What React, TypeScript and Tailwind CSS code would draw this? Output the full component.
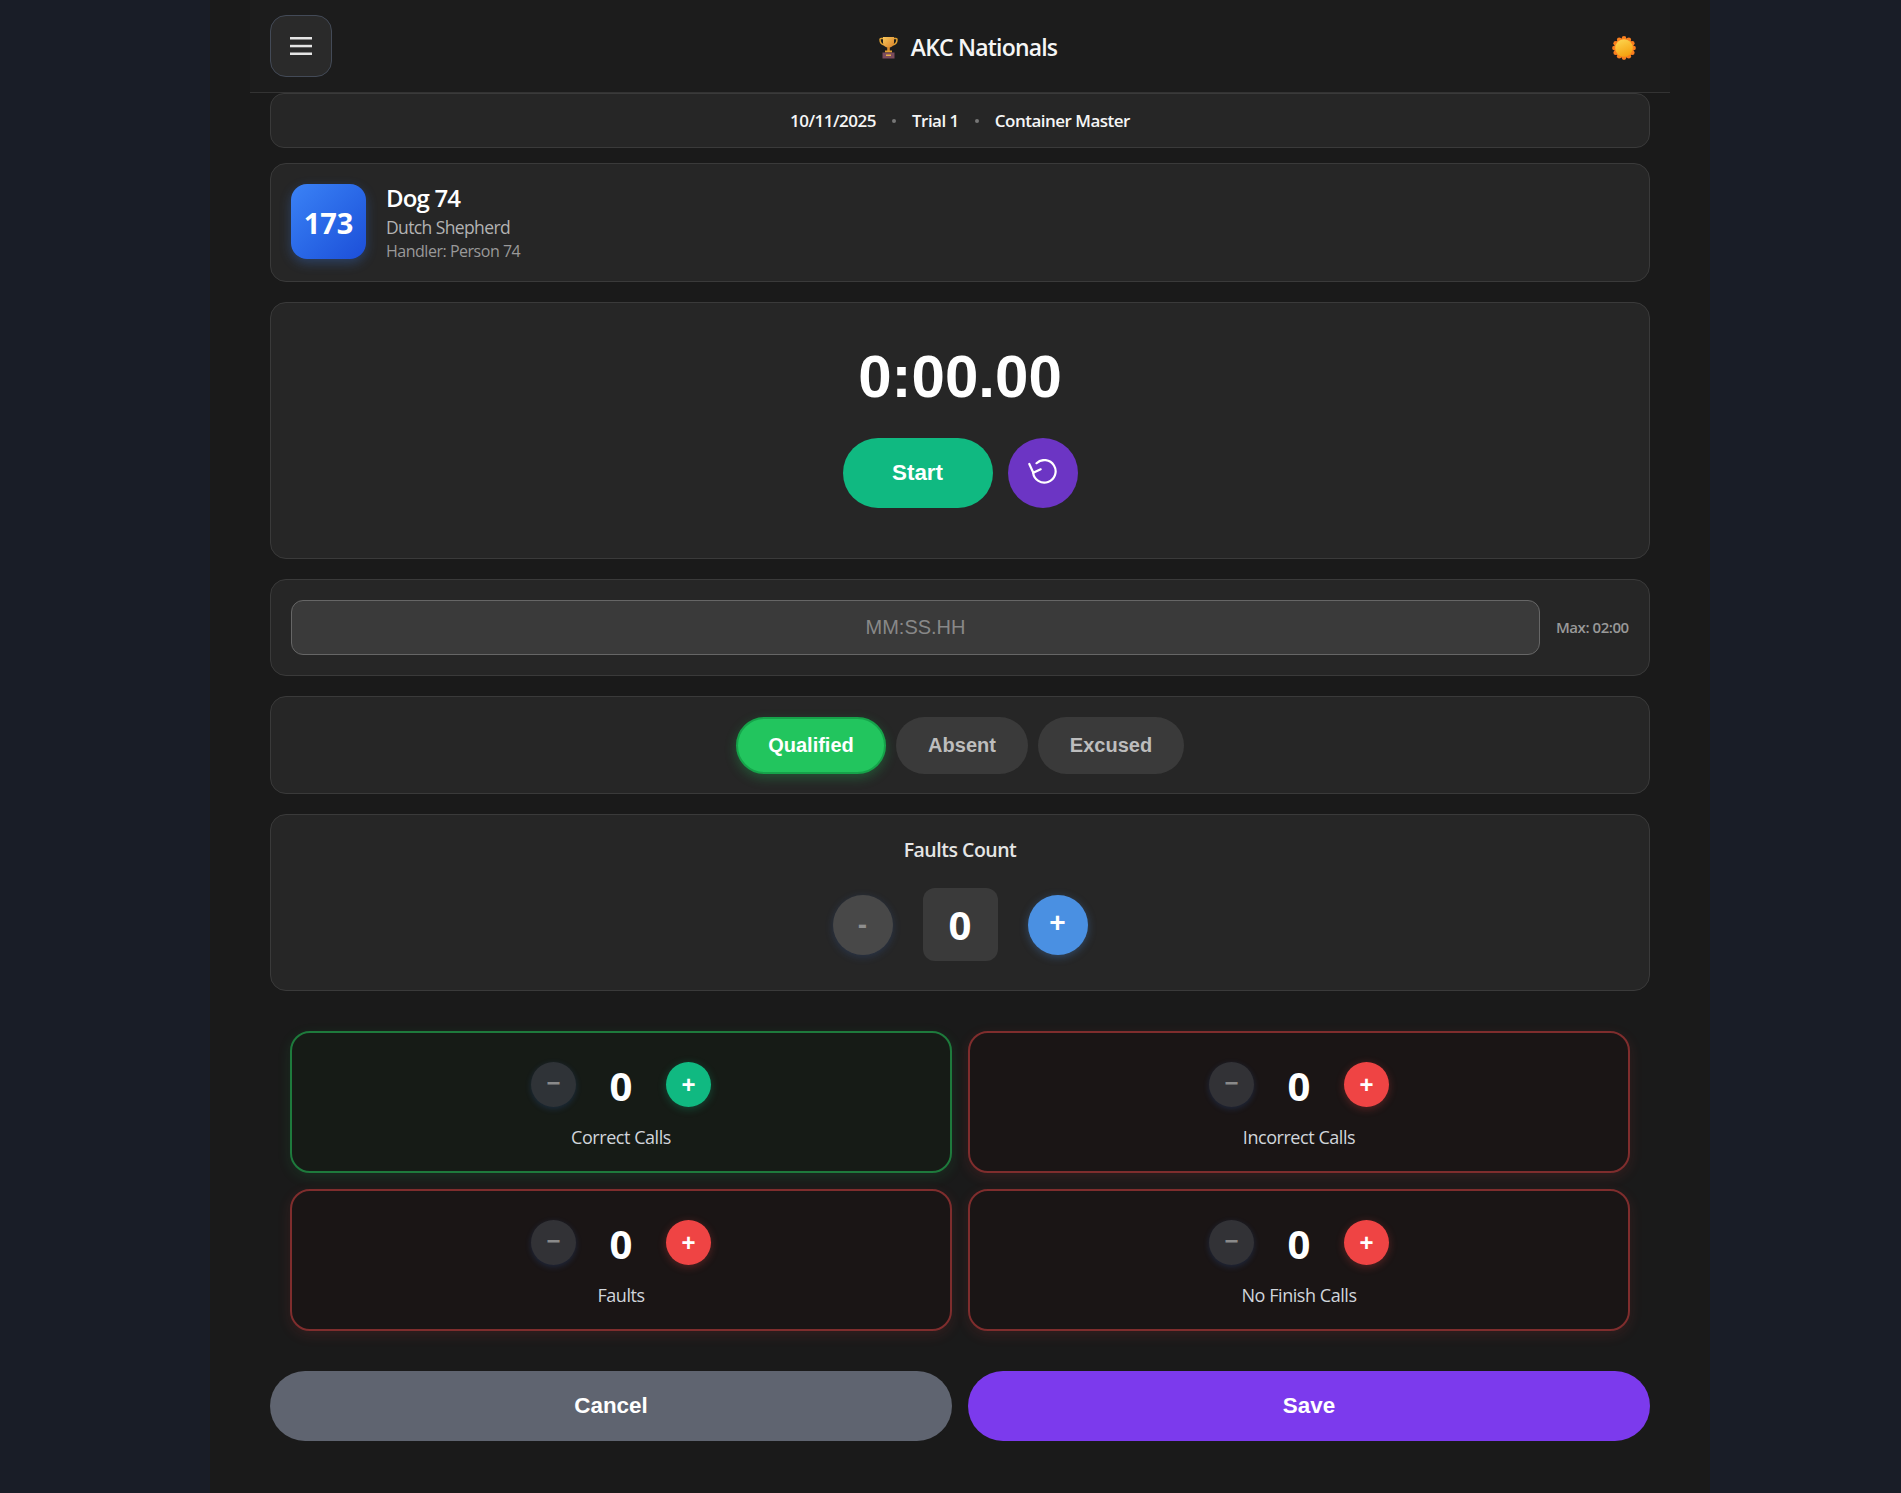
import React from 'react'

const sans = 'font-["Open_Sans","Noto_Sans",sans-serif]'
const arial = 'font-["Liberation_Sans",Arial,sans-serif]'

function Card({ className = '', children }: { className?: string; children: React.ReactNode }) {
  return <div className={`rounded-2xl border border-[#3a3a3a] bg-[#262626] ${className}`}>{children}</div>
}

function Trophy() {
  return (
    <svg width="19" height="23" viewBox="0 0 19 23" fill="none">
      <defs>
        <linearGradient id="cup" x1="0" y1="0" x2="1" y2="1">
          <stop offset="0" stopColor="#f8c75a" />
          <stop offset="1" stopColor="#d9822b" />
        </linearGradient>
      </defs>
      <path d="M4.5 2.5H2a1 1 0 0 0-1 1c0 3 1.500 5 4.500 5.500M14.500 2.500H17a1 1 0 0 1 1 1c0 3-1.500 5-4.500 5.500" stroke="#e0a030" strokeWidth="1.500" />
      <path d="M4 1h11v5.500c0 3-2.500 5-5.500 5S4 9.500 4 6.500z" fill="url(#cup)" />
      <rect x="8.200" y="11" width="2.600" height="5" fill="#d98a2c" />
      <rect x="6" y="14.500" width="7" height="2" fill="#e0a030" />
      <rect x="3.500" y="16.500" width="12" height="6" fill="#7b4b5c" />
      <rect x="7" y="18.500" width="5" height="1.500" fill="#e8b04a" />
    </svg>
  )
}

function Sun() {
  const bumps = Array.from({ length: 12 }, (_, i) => (i * Math.PI) / 6)
  return (
    <svg width="24" height="24" viewBox="0 0 24 24">
      <defs>
        <linearGradient id="sun" x1="0.3" y1="0" x2="0.7" y2="1">
          <stop offset="0" stopColor="#fcd34d" />
          <stop offset="1" stopColor="#f59e0b" />
        </linearGradient>
      </defs>
      {bumps.map((a, i) => (
        <circle key={i} cx={12 + 9.6 * Math.cos(a)} cy={12 + 9.6 * Math.sin(a)} r="2.300" fill="#f97f1f" />
      ))}
      <circle cx="12" cy="12" r="10" fill="#f97f1f" />
      <circle cx="12" cy="12" r="8.800" fill="url(#sun)" />
    </svg>
  )
}

function ResetIcon() {
  return (
    <svg width="32" height="28" viewBox="0 0 32 28" fill="none" stroke="#ffffff" strokeWidth="2.200" strokeLinecap="round" strokeLinejoin="round">
      <path d="M9.500 4.200A11.300 11.300 0 1 1 6.100 13.700" />
      <path d="M2.300 5 6.300 13.700 13.700 10.300" />
    </svg>
  )
}

function Counter({ label, tone }: { label: string; tone: 'green' | 'red' }) {
  const green = tone === 'green'
  return (
    <div
      className={`flex h-[142px] flex-col items-center rounded-[20px] border-2 pt-[29px] ${
        green
          ? 'border-[#1e7a3c] bg-[#161b16] shadow-[0_4px_14px_rgba(34,197,94,0.12)]'
          : 'border-[#7f2d2d] bg-[#1a1515] shadow-[0_4px_14px_rgba(239,68,68,0.12)]'
      }`}
    >
      <div className="flex items-center">
        <button className={`flex h-[45px] w-[45px] items-center justify-center rounded-full pb-1 text-2xl font-bold text-[#8a8a8a] shadow-[0_2px_6px_rgba(59,130,246,0.18)] ${arial} ${green ? 'bg-[#2f3337]' : 'bg-[#323236]'}`}>
          −
        </button>
        <div className={`h-[45px] w-[90px] text-center text-[40px] leading-[47px] font-bold text-white ${sans}`}>0</div>
        <button
          className={`flex h-[45px] w-[45px] items-center justify-center rounded-full text-2xl font-bold text-white ${arial} ${
            green ? 'bg-[#10b981] shadow-[0_2px_8px_rgba(16,185,129,0.3)]' : 'bg-[#ef4444] shadow-[0_2px_8px_rgba(239,68,68,0.3)]'
          }`}
        >
          +
        </button>
      </div>
      <div className={`mt-[18px] text-lg leading-6 font-medium tracking-[-0.025em] text-[#d1d5db] ${sans}`}>{label}</div>
    </div>
  )
}

export default function App() {
  return (
    <div className="min-h-[1493px] bg-[#191d27]">
      <div className={`ml-[210px] flex h-[1493px] w-[1500px] justify-center bg-[#1a1a1a] ${sans}`}>
        <div className="w-[1420px]">
          <header className="flex h-[93px] items-center justify-between border-b border-[#333333] bg-[#1c1c1c] pr-[34px] pl-5">
            <button className="flex h-[62px] w-[62px] items-center justify-center rounded-2xl border border-[#434a57] bg-[#2a2a2a]">
              <svg width="22" height="18" viewBox="0 0 22 18" fill="#e5e5e5">
                <rect y="0" width="22" height="2.500" />
                <rect y="7.800" width="22" height="2.500" />
                <rect y="15.500" width="22" height="2.500" />
              </svg>
            </button>
            <h1 className="flex items-center gap-[13px] pt-0.5 text-[23px] leading-8 font-semibold tracking-[-0.035em] text-[#f5f5f5]">
              <Trophy />
              AKC Nationals
            </h1>
            <div className="mt-1 flex w-8 justify-end">
              <Sun />
            </div>
          </header>

          <div className="flex flex-col gap-5 px-5">
            <Card className="-mb-[5px] flex h-[55px] items-center justify-center gap-4 rounded-[14px] text-[17px] font-semibold tracking-[-0.03em] text-[#f5f5f5]">
              <span>10/11/2025</span>
              <span className="h-1 w-1 rounded-full bg-[#777777]" />
              <span>Trial 1</span>
              <span className="h-1 w-1 rounded-full bg-[#777777]" />
              <span>Container Master</span>
            </Card>

            <Card className="flex h-[119px] items-center gap-5 pl-5">
              <div className="mb-0.5 flex h-[75px] w-[75px] items-center justify-center rounded-2xl bg-gradient-to-br from-[#3b82f6] to-[#1d4ed8] pt-0.5 text-[29px] font-bold text-white shadow-[0_4px_12px_rgba(59,130,246,0.3)]">
                173
              </div>
              <div>
                <div className="text-2xl leading-7 font-semibold tracking-[-0.035em] text-white">Dog 74</div>
                <div className="mt-0.5 text-[17.5px] leading-[26px] tracking-[-0.035em] text-[#b3b3b3]">Dutch Shepherd</div>
                <div className="text-base leading-[22px] tracking-[-0.03em] text-[#999999]">Handler: Person 74</div>
              </div>
            </Card>

            <Card className="flex h-[257px] flex-col items-center pt-[38px]">
              <div className={`text-[60px] leading-[72px] font-bold text-white ${arial}`}>0:00.00</div>
              <div className={`mt-[25px] flex gap-[15px] ${arial}`}>
                <button className="h-[70px] w-[150px] rounded-full bg-[#10b981] text-[22.4px] font-bold text-white">Start</button>
                <button className="flex h-[70px] w-[70px] items-center justify-center rounded-full bg-[#6c35c4]">
                  <ResetIcon />
                </button>
              </div>
            </Card>

            <Card className="flex h-[97px] items-center gap-4 px-5">
              <input
                placeholder="MM:SS.HH"
                className={`h-[55px] w-[1249px] rounded-xl border border-[#666666] bg-[#3a3a3a] text-center text-xl text-white outline-none placeholder:text-[#888888] ${arial}`}
              />
              <span className="text-[15px] font-semibold tracking-[-0.03em] whitespace-nowrap text-[#999999]">Max: 02:00</span>
            </Card>

            <Card className={`flex h-[98px] items-center justify-center gap-2.5 ${arial}`}>
              <button className="h-[57px] w-[150px] rounded-full border-2 border-[#16a34a] bg-[#22c55e] text-xl font-bold text-white shadow-[0_4px_12px_rgba(34,197,94,0.3)]">
                Qualified
              </button>
              <button className="h-[57px] w-[132px] rounded-full bg-[#3a3a3a] text-xl font-bold text-[#bdbdbd]">Absent</button>
              <button className="h-[57px] w-[146px] rounded-full bg-[#3a3a3a] text-xl font-bold text-[#bdbdbd]">Excused</button>
            </Card>

            <Card className="flex h-[177px] flex-col items-center pt-[21px]">
              <div className="text-[19.5px] leading-7 font-semibold tracking-[-0.025em] text-[#e5e5e5]">Faults Count</div>
              <div className="mt-[24px] flex items-center gap-[30px]">
                <button className={`h-[60px] w-[60px] rounded-full bg-[#484848] text-[28px] font-bold text-[#8f8f8f] shadow-[0_2px_8px_rgba(59,130,246,0.18)] ${arial}`}>-</button>
                <div className="flex h-[73px] w-[75px] items-center justify-center rounded-xl bg-[#3a3a3a] text-[40px] font-bold text-white">0</div>
                <button className={`h-[60px] w-[60px] rounded-full bg-[#4a90e2] pb-1 text-[28px] font-bold text-white shadow-[0_2px_8px_rgba(74,144,226,0.35)] ${arial}`}>+</button>
              </div>
            </Card>

            <div className="grid grid-cols-2 gap-4 p-5">
              <Counter label="Correct Calls" tone="green" />
              <Counter label="Incorrect Calls" tone="red" />
              <Counter label="Faults" tone="red" />
              <Counter label="No Finish Calls" tone="red" />
            </div>

            <div className={`grid grid-cols-2 gap-4 ${arial}`}>
              <button className="h-[70px] rounded-full bg-[#5f6470] text-[22.4px] font-bold text-white">Cancel</button>
              <button className="h-[70px] rounded-full bg-[#7c3aed] text-[22.4px] font-bold text-white">Save</button>
            </div>
          </div>
        </div>
      </div>
    </div>
  )
}
